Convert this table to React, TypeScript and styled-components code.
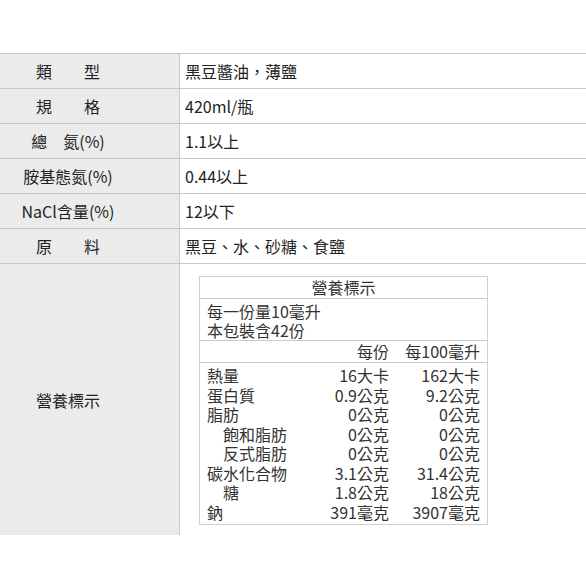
import React from "react";
import styled, { createGlobalStyle } from "styled-components";

const Global = createGlobalStyle`
  html, body { margin: 0; padding: 0; background: #fff; }
  body { font-family: "Noto Sans CJK TC", "Noto Sans", sans-serif; color: #222; }
`;

const Page = styled.div`
  padding-top: 53px;
  width: 586px;
`;

const Table = styled.div`
  display: grid;
  grid-template-columns: 180px 1fr;
  border-top: 1px solid #c8c8c8;
  font-size: 16px;
`;

const LabelCell = styled.div<{ $tall?: boolean }>`
  box-sizing: border-box;
  height: ${(p) => (p.$tall ? "271px" : "35px")};
  background: #ebebeb;
  border-right: 1px solid #c8c8c8;
  border-bottom: ${(p) => (p.$tall ? "none" : "1px solid #c8c8c8")};
  display: flex;
  align-items: center;
  justify-content: center;
  padding-right: 43px;
  white-space: pre;
  line-height: 20px;
`;

const ValueCell = styled.div<{ $tall?: boolean }>`
  box-sizing: border-box;
  height: ${(p) => (p.$tall ? "271px" : "35px")};
  border-bottom: ${(p) => (p.$tall ? "none" : "1px solid #c8c8c8")};
  display: flex;
  align-items: ${(p) => (p.$tall ? "flex-start" : "center")};
  padding: ${(p) => (p.$tall ? "12px 0 0 19px" : "0 0 0 5px")};
  line-height: 20px;
`;

const Box = styled.div`
  width: 289px;
  box-sizing: border-box;
  border: 1px solid #cfcfcf;
  color: #333;
  font-size: 16px;
  display: flex;
  flex-direction: column;
`;

const BoxTitle = styled.div`
  height: 21px;
  line-height: 21px;
  text-align: center;
`;

const Divider = styled.div`
  height: 1px;
  background: #c8c8c8;
  flex: none;
`;

const Serving = styled.div`
  height: 41px;
  box-sizing: border-box;
  padding: 3px 7px 0;
  line-height: 19px;
`;

const Grid = styled.div<{ $pad: string; $lh: string }>`
  display: grid;
  grid-template-columns: 1fr 92px 91px;
  padding: ${(p) => p.$pad};
  line-height: ${(p) => p.$lh};
`;

const Name = styled.span<{ $indent?: boolean }>`
  padding-left: ${(p) => (p.$indent ? "16px" : "0")};
  white-space: nowrap;
`;

const Num = styled.span`
  text-align: right;
  white-space: nowrap;
`;

const rows: [string, string][] = [
  ["類　　型", "黑豆醬油，薄鹽"],
  ["規　　格", "420ml/瓶"],
  ["總　氮(%)", "1.1以上"],
  ["胺基態氮(%)", "0.44以上"],
  ["NaCl含量(%)", "12以下"],
  ["原　　料", "黑豆、水、砂糖、食鹽"],
];

const nutrients: [string, string, string, boolean][] = [
  ["熱量", "16大卡", "162大卡", false],
  ["蛋白質", "0.9公克", "9.2公克", false],
  ["脂肪", "0公克", "0公克", false],
  ["飽和脂肪", "0公克", "0公克", true],
  ["反式脂肪", "0公克", "0公克", true],
  ["碳水化合物", "3.1公克", "31.4公克", false],
  ["糖", "1.8公克", "18公克", true],
  ["鈉", "391毫克", "3907毫克", false],
];

export default function App() {
  return (
    <Page>
      <Global />
      <Table>
        {rows.map(([l, v]) => (
          <React.Fragment key={l}>
            <LabelCell>{l}</LabelCell>
            <ValueCell>{v}</ValueCell>
          </React.Fragment>
        ))}
        <LabelCell $tall>營養標示</LabelCell>
        <ValueCell $tall>
          <Box>
            <BoxTitle>營養標示</BoxTitle>
            <Divider />
            <Serving>
              <div>每一份量10毫升</div>
              <div>本包裝含42份</div>
            </Serving>
            <Divider />
            <Grid $pad="0 7px 1px" $lh="20px">
              <Name />
              <Num>每份</Num>
              <Num>每100毫升</Num>
            </Grid>
            <Divider />
            <Grid $pad="3px 7px 2px" $lh="19.5px">
              {nutrients.map(([n, a, b, ind]) => (
                <React.Fragment key={n}>
                  <Name $indent={ind}>{n}</Name>
                  <Num>{a}</Num>
                  <Num>{b}</Num>
                </React.Fragment>
              ))}
            </Grid>
          </Box>
        </ValueCell>
      </Table>
    </Page>
  );
}
